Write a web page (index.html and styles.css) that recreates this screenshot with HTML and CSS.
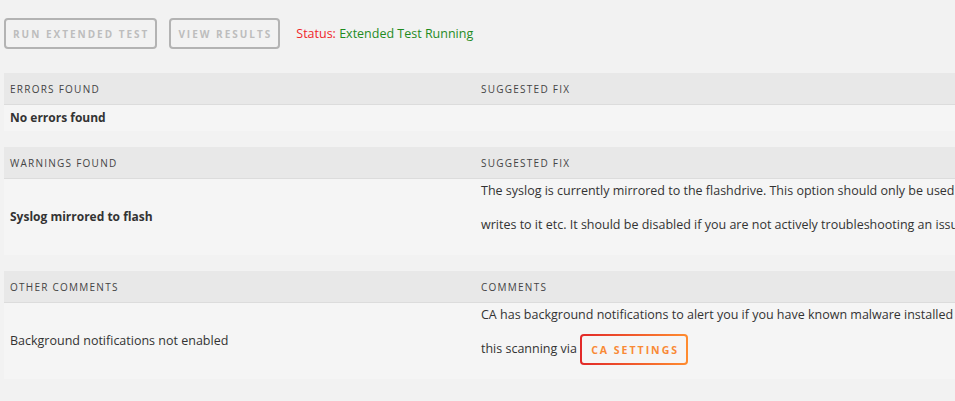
FILE: index.html
```html
<!DOCTYPE html>
<html lang="en">
<head>
    <meta charset="UTF-8">
    <title>Fix Common Problems</title>
    <link rel="stylesheet" href="styles.css">
</head>
<body>
    <div class="wrapper">
        <div class="toolbar">
            <button class="btn" disabled>Run Extended Test</button>
            <button class="btn" disabled>View Results</button>
            <span class="status"><span class="status-label">Status:</span> Extended Test Running</span>
        </div>

        <!-- errors -->
        <table class="results">
            <thead>
                <tr><th class="col-name">Errors Found</th><th>Suggested Fix</th></tr>
            </thead>
            <tbody>
                <tr><td class="name bold">No errors found</td><td class="fix"></td></tr>
            </tbody>
        </table>

        <!-- warnings -->
        <table class="results">
            <thead>
                <tr><th class="col-name">Warnings Found</th><th>Suggested Fix</th></tr>
            </thead>
            <tbody>
                <tr>
                    <td class="name bold">Syslog mirrored to flash</td>
                    <td class="fix"><p>The syslog is currently mirrored to the flashdrive. This option should only be used for troubleshooting as it causes excessive<br>writes to it etc. It should be disabled if you are not actively troubleshooting an issue</p></td>
                </tr>
            </tbody>
        </table>

        <!-- other comments -->
        <table class="results">
            <thead>
                <tr><th class="col-name">Other Comments</th><th>Comments</th></tr>
            </thead>
            <tbody>
                <tr>
                    <td class="name">Background notifications not enabled</td>
                    <td class="fix"><p>CA has background notifications to alert you if you have known malware installed on your system. You should enable<br>this scanning via <button class="btn-ca">CA Settings</button></p></td>
                </tr>
            </tbody>
        </table>
    </div>
</body>
</html>
```

FILE: styles.css
```css
html, body{
    overflow: hidden;
}
body{
    margin: 0;
    background: #f2f2f2;
    font-family: "Open Sans", sans-serif;
    font-size: 12.5px;
    color: #333;
}
.wrapper{
    width: 1300px;
    padding: 18px 0 0 4px;
}
.toolbar{
    display: flex;
    align-items: center;
    gap: 12px;
    height: 31px;
    margin-bottom: 24px;
}
.btn{
    height: 31px;
    padding: 0 6px 0 7px;
    border: 2px solid #b3b3b3;
    border-radius: 4px;
    background: transparent;
    color: #bdbdbd;
    font-family: "Open Sans", sans-serif;
    font-size: 10px;
    font-weight: bold;
    letter-spacing: 2px;
    text-transform: uppercase;
}
.status{
    margin-left: 4px;
    color: #1f8b1f;
}
.status-label{
    color: #f0262a;
}
.results{
    width: 1300px;
    border-collapse: collapse;
    margin-bottom: 16px;
}
.results th{
    height: 31px;
    padding: 0 6px;
    background: #e8e8e8;
    border-bottom: 1px solid #dcdcdc;
    text-align: left;
    font-size: 10px;
    font-weight: normal;
    letter-spacing: 1.25px;
    text-transform: uppercase;
    color: #444;
}
.results th.col-name{
    width: 459px;
}
.results td{
    padding: 0 6px;
    background: #f5f5f5;
}
.results td.name{
    line-height: 26px;
    vertical-align: middle;
}
.results td.bold{
    font-size: 12px;
    font-weight: bold;
}
.results td.fix{
    vertical-align: top;
    padding-bottom: 13px;
    white-space: nowrap;
}
.fix p{
    margin: -5px 0 0;
    line-height: 34px;
}
.btn-ca{
    height: 31px;
    padding: 0 7px 0 9px;
    border: 2px solid transparent;
    border-radius: 4px;
    background: linear-gradient(#f5f5f5, #f5f5f5) padding-box,
                linear-gradient(90deg, #e22828, #ff8c2f) border-box;
    color: #f98a35;
    font-family: "Open Sans", sans-serif;
    font-size: 10.5px;
    font-weight: bold;
    letter-spacing: 2px;
    text-transform: uppercase;
    vertical-align: middle;
}
```
